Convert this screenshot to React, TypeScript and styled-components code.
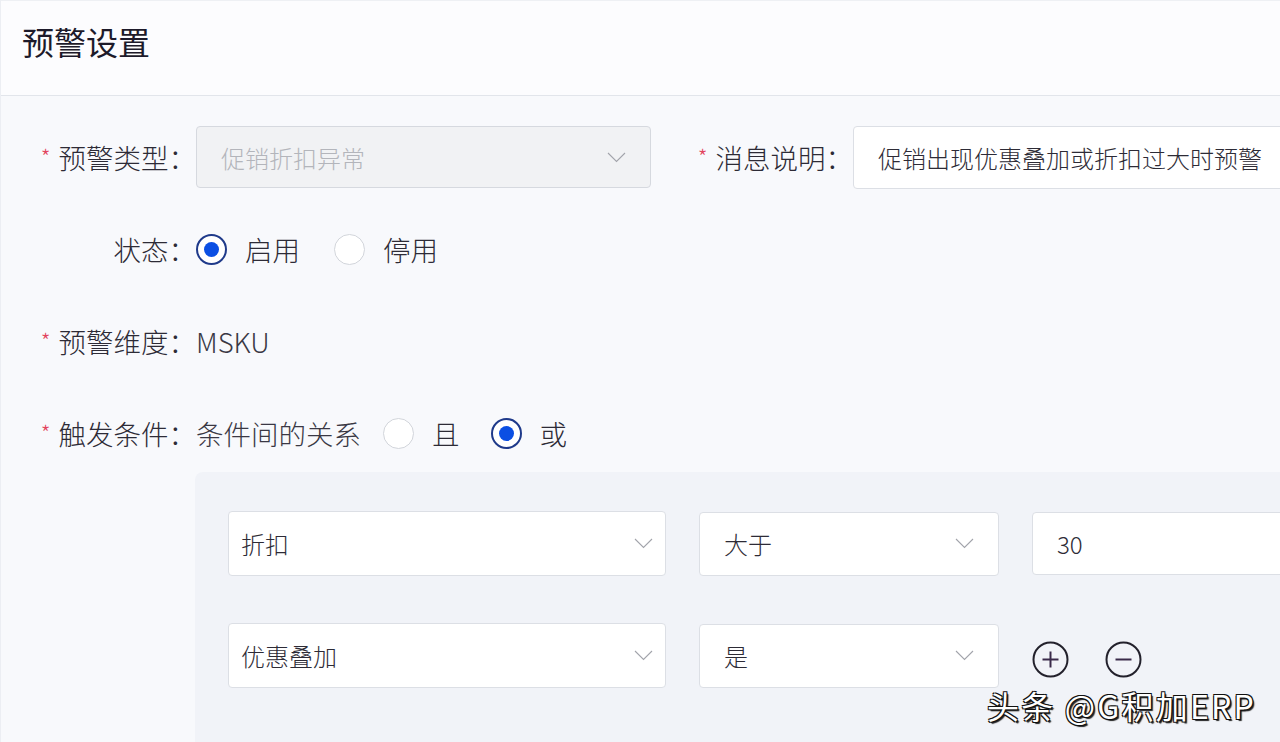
import React from "react";
import styled, {createGlobalStyle} from "styled-components";

const GlobalStyle = createGlobalStyle`
  body {
    margin: 0;
    background: #f8f9fc;
    font-family: "Noto Sans CJK SC", "Noto Sans", sans-serif;
    color: #2d2b36;
  }
`;

const Page = styled.div`
  position: relative;
  width: 1280px;
  height: 742px;
  overflow: hidden;
  background: #f8f9fc;
  border-left: 1px solid #eceef3;
  box-sizing: border-box;
`;

const Header = styled.div`
  height: 96px;
  display: flex;
  align-items: flex-start;
  padding: 17px 0 0 21px;
  background: #fcfcfe;
  border-top: 1px solid #eef0f4;
  border-bottom: 1px solid #e2e5eb;
  box-sizing: border-box;
  font-size: 32px;
  font-weight: 400;
  color: #1d1a2a;
`;

const Form = styled.div`
  display: flex;
  flex-direction: column;
  gap: 30px;
  padding-top: 30px;
`;

const FormRow = styled.div`
  display: flex;
  align-items: center;
  height: 62px;
  flex: none;
`;

const FieldLabel = styled.div<{ $width: number; $offset?: number }>`
  flex: none;
  width: ${({$width}) => $width}px;
  margin-left: ${({$offset}) => $offset || 0}px;
  display: flex;
  justify-content: flex-end;
  align-items: center;
  font-size: 27.5px;
  font-weight: 300;
  color: #2d2b36;
  white-space: nowrap;
`;

const Star = styled.span`
  color: #e2435d;
  font-size: 22px;
  margin-right: 8px;
  transform: translateY(-1px);
`;

const Box = styled.div<{ $width: number; $height: number; $pad: number; $disabled?: boolean }>`
  flex: none;
  box-sizing: border-box;
  width: ${({$width}) => $width}px;
  height: ${({$height}) => $height}px;
  padding: 0 ${({$pad}) => $pad}px;
  display: flex;
  align-items: center;
  justify-content: space-between;
  background: ${({$disabled}) => ($disabled ? "#f1f2f4" : "#fff")};
  border: 1px solid ${({$disabled}) => ($disabled ? "#d6d9df" : "#dcdfe5")};
  border-radius: 4px;
  font-size: 24px;
  font-weight: 300;
  color: ${({$disabled}) => ($disabled ? "#b3b5bb" : "#2d2b36")};
  white-space: nowrap;
`;

const Plain = styled.span<{ $gapAfter?: number }>`
  margin-right: ${({$gapAfter}) => $gapAfter || 0}px;
  font-size: 27.5px;
  font-weight: 300;
  color: #3a3844;
`;

const RadioItem = styled.label<{ $gapAfter: number }>`
  display: flex;
  align-items: center;
  gap: 18px;
  margin-right: ${({$gapAfter}) => $gapAfter}px;
  font-size: 27.5px;
  font-weight: 300;
  color: #2d2b36;
`;

const RadioCircle = styled.span<{ $checked?: boolean }>`
  width: 31px;
  height: 31px;
  box-sizing: border-box;
  border-radius: 50%;
  background: #fff;
  border: ${({$checked}) => ($checked ? "2px solid #1f3a8a" : "1px solid #d2d5db")};
  display: flex;
  align-items: center;
  justify-content: center;

  &::after {
    content: "";
    display: ${({$checked}) => ($checked ? "block" : "none")};
    width: 15px;
    height: 15px;
    border-radius: 50%;
    background: #0b4fe3;
  }
`;

const ConditionPanel = styled.div`
  margin: 8px 0 0 194px;
  height: 300px;
  background: #f1f3f8;
  border-radius: 8px 0 0 0;
  padding: 39px 0 0 33px;
  display: flex;
  flex-direction: column;
  gap: 47px;
`;

const CondRow = styled.div`
  display: flex;
  align-items: center;
  gap: 33px;
`;

const IconButtons = styled.div`
  display: flex;
  gap: 36px;
  margin-top: 8px;
`;

const CircleButton = styled.span`
  width: 37px;
  height: 37px;
  display: flex;
`;

const Watermark = styled.div`
  position: absolute;
  left: 986px;
  top: 682px;
  font-size: 32px;
  letter-spacing: 2.2px;
  color: #fff;
  text-shadow: 1px 1px 0 #111, -1px -1px 0 #111, 1px -1px 0 #111, -1px 1px 0 #111, 2px 2px 1px #222;
  white-space: nowrap;
`;

const Chevron = () => (
    <svg width="19" height="11" viewBox="0 0 19 11">
        <polyline points="1,1 9.5,9.5 18,1" fill="none" stroke="#a2a4ab" strokeWidth="1.1"/>
    </svg>
);

const PlusMinus = ({plus}: { plus?: boolean }) => (
    <svg width="37" height="37" viewBox="0 0 37 37">
        <circle cx="18.5" cy="18.5" r="17" fill="none" stroke="#23212c" strokeWidth="2"/>
        <line x1="10.5" y1="18.5" x2="26.5" y2="18.5" stroke="#3a2a4a" strokeWidth="2"/>
        {plus && <line x1="18.5" y1="10.5" x2="18.5" y2="26.5" stroke="#3a2a4a" strokeWidth="2"/>}
    </svg>
);

const Required = ({text}: { text: string }) => <><Star>*</Star>{text}</>;

const App = () => {
    return <Page>
        <GlobalStyle/>
        <Header>预警设置</Header>
        <Form>
            <FormRow>
                <FieldLabel $width={195}><Required text="预警类型："/></FieldLabel>
                <Box $width={455} $height={62} $pad={24} $disabled>
                    促销折扣异常
                    <Chevron/>
                </Box>
                <FieldLabel $width={155} $offset={47}><Required text="消息说明："/></FieldLabel>
                <Box $width={470} $height={63} $pad={24}>促销出现优惠叠加或折扣过大时预警</Box>
            </FormRow>
            <FormRow>
                <FieldLabel $width={195}>状态：</FieldLabel>
                <RadioItem $gapAfter={34}><RadioCircle $checked/>启用</RadioItem>
                <RadioItem $gapAfter={0}><RadioCircle/>停用</RadioItem>
            </FormRow>
            <FormRow>
                <FieldLabel $width={195}><Required text="预警维度："/></FieldLabel>
                <Plain>MSKU</Plain>
            </FormRow>
            <FormRow>
                <FieldLabel $width={195}><Required text="触发条件："/></FieldLabel>
                <Plain $gapAfter={22}>条件间的关系</Plain>
                <RadioItem $gapAfter={31}><RadioCircle/>且</RadioItem>
                <RadioItem $gapAfter={0}><RadioCircle $checked/>或</RadioItem>
            </FormRow>
        </Form>
        <ConditionPanel>
            <CondRow>
                <Box $width={438} $height={65} $pad={12}>折扣<Chevron/></Box>
                <Box $width={300} $height={64} $pad={24}>大于<Chevron/></Box>
                <Box $width={280} $height={63} $pad={24}>30</Box>
            </CondRow>
            <CondRow>
                <Box $width={438} $height={65} $pad={12}>优惠叠加<Chevron/></Box>
                <Box $width={300} $height={64} $pad={24}>是<Chevron/></Box>
                <IconButtons>
                    <CircleButton><PlusMinus plus/></CircleButton>
                    <CircleButton><PlusMinus/></CircleButton>
                </IconButtons>
            </CondRow>
        </ConditionPanel>
        <Watermark>头条 @G积加ERP</Watermark>
    </Page>;
};

export default App;
